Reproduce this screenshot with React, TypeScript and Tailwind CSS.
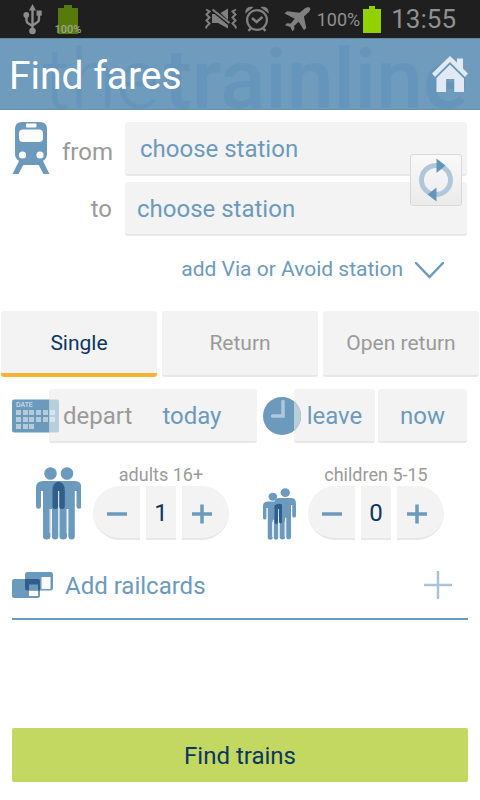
import { useState } from "react";
import type { ReactNode } from "react";

const box = "rounded-[3px] border-b-2 border-[#e7e7e7] bg-[#f3f3f3] pt-0.5";

function UsbIcon() {
  return (
    <svg width="20" height="31" viewBox="0 0 20 31" fill="none" stroke="#8c8c8c" strokeWidth="2.400" aria-hidden="true">
      <path d="M9.500 5v22M3.500 12v4.500q0 2 2 3l4 2.500M16 10v5.500q0 2-2 3l-4.500 3" />
      <g fill="#8c8c8c" stroke="none">
        <path d="M9.500 0l3.500 6.500H6z" />
        <circle cx="3.300" cy="11" r="2.900" />
        <path d="M13.500 6.500h5.200v5.200h-5.200z" />
        <circle cx="9.500" cy="27" r="3.300" />
      </g>
    </svg>
  );
}

function MuteIcon() {
  return (
    <svg width="32" height="22" viewBox="0 0 32 22" aria-hidden="true">
      <g fill="none" stroke="#808080" strokeWidth="2">
        <path d="M1 1.500l3.500 2-3 3 3 3-3 3 3 3-3 3L1 20.500" />
        <path d="M31 1.500l-3.500 2 3 3-3 3 3 3-3 3 3 3L31 20.500" />
      </g>
      <path d="M7 6v9h6l10 5.500V17L9.500 6zM15.500 5L23 .5V12z" fill="#808080" />
      <path d="M7.500 1.500L24.500 15" stroke="#808080" strokeWidth="2" />
    </svg>
  );
}

function AlarmIcon() {
  return (
    <svg width="24" height="26" viewBox="0 0 24 26" fill="none" stroke="#808080" aria-hidden="true">
      <circle cx="12" cy="14" r="9.900" strokeWidth="2.200" />
      <path d="M7 12l4.500 4 6-5" strokeWidth="2.600" />
      <path d="M6 22l-2.500 3M18 22l2.500 3" strokeWidth="2.400" />
      <path d="M0.300 7.500C0 3 3-.3 8.500 1.200zM23.700 7.500C24 3 21-.3 15.500 1.200z" fill="#808080" stroke="none" />
    </svg>
  );
}

function PlaneIcon() {
  return (
    <svg width="28" height="25" viewBox="0 0 28 25" fill="#808080" aria-hidden="true">
      <path d="M26.500.5c1.500 1 .7 3-.6 4.500l-5 4.500 2.400 11.500-2.300 2.300-5.300-8.500-4.500 4 .2 3.500-2 2-2-4.300-5.400-1.800 1.800-2 4 .2 4-4.700L1.500 6.500 4 4.300l12.700 1.500L22 1.300c1.500-1.100 3.300-1.500 4.500-.8z" />
    </svg>
  );
}

function HomeIcon() {
  return (
    <svg width="36" height="36" viewBox="0 0 36 36" fill="#e1eaf2" aria-hidden="true">
      <path d="M18 0l7 6.500V2.500h6v10l5 5-3 3.500L18 6 3 21 0 17.500z" />
      <path d="M18 8.500l14 14V36h-9.700V23h-8.200v13H4.500V22z" />
    </svg>
  );
}

function TrainIcon() {
  return (
    <svg width="38" height="52" viewBox="0 0 38 52" aria-hidden="true">
      <path d="M8 37h6.500L6.500 52H.5zM30 37h-6.500l8 15h6z" fill="#6c9abd" />
      <path d="M10 0h18q7 0 7 7v25q0 4-3.500 6.500L27 43H11l-4.500-4.500Q3 36 3 32V7q0-7 7-7z" fill="#6c9abd" />
      <rect x="14" y="1.500" width="10.500" height="4" rx="1" fill="#fff" />
      <rect x="7" y="7.500" width="24" height="12.500" rx="4" fill="#fff" />
      <circle cx="10.500" cy="33" r="3.600" fill="#fff" />
      <circle cx="28" cy="33" r="3.600" fill="#fff" />
    </svg>
  );
}

function SwapIcon() {
  return (
    <svg width="36" height="44" viewBox="0 0 36 44" aria-hidden="true">
      <circle cx="18" cy="22" r="14.500" fill="none" stroke="#b0c7d9" strokeWidth="5" />
      <path d="M18.500 0.500l9 7-9 7.500zM18.500 29.500v14l-9-7z" fill="#6495ba" />
    </svg>
  );
}

function CalendarIcon() {
  const cells = [
    [4, 11], [11, 11], [17, 11], [24, 11], [31, 11], [38, 11],
    [4, 18], [11, 18], [17, 18], [24, 18], [31, 18], [38, 18],
    [4, 25], [11, 25], [17, 25],
  ];
  return (
    <svg width="47" height="34" viewBox="0 0 47 34" aria-hidden="true">
      <path d="M2 .5h35.500v33H2q-2 0-2-2v-29q0-2 2-2z" fill="#6c9abd" />
      <path d="M37.500.5H45q2 0 2 2v29q0 2-2 2h-7.500z" fill="#b9cddb" />
      {cells.map(([x, y]) => (
        <rect key={`${x}-${y}`} x={x} y={y} width="5" height="5" fill={x > 37 ? "#d9e3ea" : "#b5cbdc"} />
      ))}
      <text x="4" y="8" fill="#e1eaf2" fontSize="7" fontFamily="Roboto, sans-serif">DATE</text>
    </svg>
  );
}

function ClockIcon() {
  return (
    <svg width="38" height="38" viewBox="0 0 38 38" aria-hidden="true">
      <circle cx="19" cy="19" r="19" fill="#6c9abd" />
      <path d="M31 4.300a19 19 0 0 1 0 29.400z" fill="#b9cddb" />
      <path d="M20 4.500v14.500H9.500" fill="none" stroke="#b0c8da" strokeWidth="3.500" strokeLinecap="round" />
    </svg>
  );
}

function Person({ fill }: { fill: string }) {
  return (
    <g fill={fill}>
      <circle cx="14.500" cy="6.500" r="6.300" />
      <path d="M7 14h15q7 0 7 7v18.500q0 2.200-2.500 2.200T24 39.500V24h-1.700v45.500q0 3-3.200 3t-3.200-3V42h-1.500v27.500q0 3-3.700 3t-3.700-3V24H5v15.500q0 2.200-2.500 2.200T0 39.500V21q0-7 7-7z" />
    </g>
  );
}

function AdultsIcon() {
  return (
    <svg width="45" height="73" viewBox="0 0 45 73" aria-hidden="true">
      <Person fill="#6c9abd" />
      <g transform="translate(16.500 0)">
        <Person fill="#6c9abd" />
      </g>
      <path d="M22.500 14.500q6.300 1 6.300 9v16q0 2.500-2.700 2.500t-2.800-2.500V24h-1.300v15.500q0 2.500-2.700 2.500t-2.800-2.500v-16q0-8 6-9z" fill="#2f5d8c" />
      <path d="M14 42v24M22.700 42v24M31 42v24" stroke="#dce7f0" strokeWidth="1" />
    </svg>
  );
}

function ChildrenIcon() {
  return (
    <svg width="33" height="52" viewBox="0 0 33 52" aria-hidden="true">
      <g transform="translate(11.500 0) scale(.74 .71)">
        <Person fill="#6c9abd" />
      </g>
      <g transform="translate(0 4.500) scale(.68 .65)">
        <Person fill="#6c9abd" />
      </g>
      <path d="M11.500 17.500q4-3 7.500-1v17q0 2-1.500 2T16 33.500V21h-1v13q0 2-1.700 2t-1.800-2z" fill="#2f5d8c" />
      <path d="M9.500 34v15M22 34v15" stroke="#dce7f0" strokeWidth="1" />
    </svg>
  );
}

function RailcardIcon() {
  return (
    <svg width="41" height="26" viewBox="0 0 41 26" aria-hidden="true">
      <rect x="13" width="28" height="18.500" rx="2.500" fill="#6c9abd" />
      <rect y="7" width="28" height="19" rx="2.500" fill="#6c9abd" />
      <path d="M13 7h13q2 0 2 2v9.500H15q-2 0-2-2z" fill="#2f5d8c" />
      <path d="M29.500 5h9v12h-9z" fill="#fff" />
      <path d="M17 18.500h9v5.500h-9z" fill="#fff" />
      <path d="M17 12.500h9v6h-9z" fill="#6c9abd" />
    </svg>
  );
}

function Sign({ plus = false }: { plus?: boolean }) {
  return (
    <svg width="20" height="20" viewBox="0 0 20 20" stroke="#6c9abd" strokeWidth="3.500" aria-hidden="true">
      <path d={plus ? "M0 10h20M10 0.500v19" : "M0 10h20"} />
    </svg>
  );
}

function Stepper({ id, label, icon, value, onChange }: {
  id: string;
  label: string;
  icon: ReactNode;
  value: number;
  onChange: (n: number) => void;
}) {
  return (
    <div className="flex items-end gap-3">
      {icon}
      <div className="flex flex-col items-center">
        <label htmlFor={id} className="text-[18px] leading-[22px] whitespace-nowrap text-[#9a9a9a]">{label}</label>
        <div className="flex gap-1.5">
          <button type="button" aria-label={`Fewer ${label}`} onClick={() => onChange(Math.max(0, value - 1))}
            className="flex h-[54px] w-[47px] items-center justify-center rounded-l-[27px] border-b-2 border-[#e7e7e7] bg-[#f3f3f3] pt-1">
            <Sign />
          </button>
          <input id={id} type="text" inputMode="numeric" value={value} onChange={(e) => onChange(Number(e.target.value) || 0)}
            className="h-[54px] w-[30px] border-b-2 border-[#e7e7e7] bg-[#f3f3f3] pt-0.5 text-center text-[24px] text-[#0b3563] outline-none" />
          <button type="button" aria-label={`More ${label}`} onClick={() => onChange(value + 1)}
            className="flex h-[54px] w-[47px] items-center justify-center rounded-r-[27px] border-b-2 border-[#e7e7e7] bg-[#f3f3f3] pt-1 pr-2">
            <Sign plus />
          </button>
        </div>
      </div>
    </div>
  );
}

export default function App() {
  const [ticket, setTicket] = useState("Single");
  const [adults, setAdults] = useState(1);
  const [children, setChildren] = useState(0);

  return (
    <div className="flex min-h-screen flex-col bg-white font-['Roboto',sans-serif] text-[#6c9abd]">
      <div className="flex h-[38px] items-center bg-[#1f1f1f] pr-6 pl-[23px] text-[#909090]">
        <UsbIcon />
        <div className="relative ml-[15px] h-[29px] w-5">
          <svg width="20" height="29" viewBox="0 0 20 29" fill="#577a0c" aria-hidden="true">
            <path d="M6 0h8v3h6v26H0V3h6z" />
          </svg>
          <span className="absolute -bottom-px left-1/2 -translate-x-1/2 text-[11px] leading-[10px] font-medium text-[#a0a58c]">100%</span>
        </div>
        <div className="ml-auto flex items-center">
          <MuteIcon />
          <span className="ml-2"><AlarmIcon /></span>
          <span className="ml-[14px]"><PlaneIcon /></span>
          <span className="ml-1.5 text-[18px]">100%</span>
          <svg className="ml-[3px]" width="18" height="27" viewBox="0 0 18 27" fill="#92d000" aria-hidden="true">
            <path d="M6 0h6v3h6v24H0V3h6z" />
          </svg>
          <span className="ml-[10px] text-[26px] leading-[38px]">13:55</span>
        </div>
      </div>

      <header className="relative flex h-[72px] items-center justify-between overflow-hidden border-t border-b border-t-[#5f87a5] border-b-[#6490b2] bg-[#6f9bbc] pr-3 pl-[9px]">
        <div aria-hidden="true" className="absolute top-0 right-3 text-[84px] leading-[82px] whitespace-nowrap text-[#6595bb]">
          <span className="mr-1 font-light">the</span><span className="font-medium">trainline</span>
        </div>
        <h1 className="relative pt-1 text-[39px] leading-[48px] text-white">Find fares</h1>
        <a href="#home" aria-label="Home" className="relative"><HomeIcon /></a>
      </header>

      <main className="flex flex-1 flex-col">
        <section className="flex pt-3 pr-[13px] pl-3">
          <TrainIcon />
          <div className="relative ml-3 flex flex-1 flex-col gap-1.5 text-[24px]">
            <div className="flex items-center">
              <label htmlFor="from" className="w-[50px] pt-1.5 text-right text-[#9a9a9a]">from</label>
              <button id="from" type="button" className={`ml-[13px] h-[54px] flex-1 pl-[15px] text-left ${box}`}>choose station</button>
            </div>
            <div className="flex items-center">
              <label htmlFor="to" className="w-[50px] text-right text-[#9a9a9a]">to</label>
              <button id="to" type="button" className={`ml-[13px] h-[54px] flex-1 pl-3 text-left ${box}`}>choose station</button>
            </div>
            <button type="button" aria-label="Swap stations"
              className="absolute top-8 right-[5px] flex h-[52px] w-[52px] items-center justify-center rounded-[3px] border border-[#d9d9d9] bg-linear-to-b from-[#f9f9f9] to-[#ebebeb]">
              <SwapIcon />
            </button>
          </div>
        </section>

        <button type="button" className="mt-4 mr-9 flex h-9 items-center gap-3 self-end text-[21px]">
          add Via or Avoid station
          <svg width="29" height="17" viewBox="0 0 29 17" fill="none" stroke="#6c9abd" strokeWidth="2.500" aria-hidden="true">
            <path d="M1 1l13.500 14L28 1" strokeLinecap="round" />
          </svg>
        </button>

        <div role="tablist" className="mt-[23px] flex gap-[5px] px-px text-[21px]">
          {["Single", "Return", "Open return"].map((name) => (
            <button key={name} type="button" role="tab" aria-selected={ticket === name} onClick={() => setTicket(name)}
              className={`h-[66px] flex-1 basis-0 rounded-[3px] bg-[#f3f3f3] whitespace-nowrap ${
                ticket === name ? "border-b-4 border-[#f9b233] pt-1 text-[#0b3563]" : "border-b-2 border-[#e7e7e7] pt-0.5 text-[#9a9a9a]"
              }`}>
              {name}
            </button>
          ))}
        </div>

        <section className="mt-3 flex items-center pr-[13px] pl-3 text-[24px]">
          <span className="z-10"><CalendarIcon /></span>
          <button type="button" className={`-ml-[10px] flex h-[54px] flex-1 items-center gap-[30px] pl-[14px] ${box}`}>
            <span className="text-[#9a9a9a]">depart</span>
            <span>today</span>
          </button>
          <span className="z-10 ml-1.5"><ClockIcon /></span>
          <button type="button" className={`-ml-[7px] h-[54px] w-[81px] ${box}`}>leave</button>
          <button type="button" className={`ml-[3px] h-[54px] w-[89px] ${box}`}>now</button>
        </section>

        <section className="mt-[21px] flex justify-between px-9">
          <Stepper id="adults" label="adults 16+" icon={<AdultsIcon />} value={adults} onChange={setAdults} />
          <Stepper id="children" label="children 5-15" icon={<ChildrenIcon />} value={children} onChange={setChildren} />
        </section>

        <button type="button" className="mx-3 mt-3 flex h-[68px] items-center border-b-2 border-[#6c9abd] pr-4 text-[24px]">
          <RailcardIcon />
          <span className="ml-3 pt-0.5">Add railcards</span>
          <svg className="ml-auto" width="28" height="28" viewBox="0 0 28 28" stroke="#a9c4d9" strokeWidth="2.500" aria-hidden="true">
            <path d="M0 14h28M14 0v28" />
          </svg>
        </button>

        <button type="button" className="mx-3 mt-auto mb-[18px] h-[54px] rounded-[2px] bg-[#c2d860] pt-0.5 text-[24px] text-[#0b3563]">
          Find trains
        </button>
      </main>
    </div>
  );
}
